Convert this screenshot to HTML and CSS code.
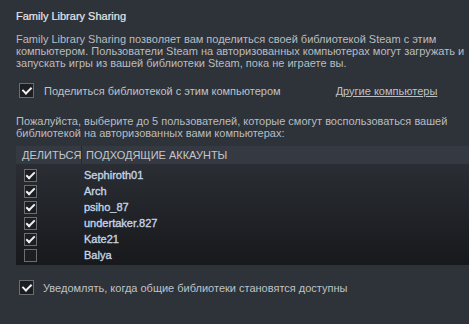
FILE: index.html
```html
<!DOCTYPE html>
<html lang="ru">
<head>
<meta charset="utf-8">
<link rel="stylesheet" href="styles.css">
</head>
<body>
<div class="page">
  <h1 class="title">Family Library Sharing</h1>
  <p class="intro">Family Library Sharing позволяет вам поделиться своей библиотекой Steam с этим компьютером. Пользователи Steam на авторизованных компьютерах могут загружать и запускать игры из вашей библиотеки Steam, пока не играете вы.</p>
  <div class="share-row">
    <label class="opt"><span class="cb big checked"></span><span>Поделиться библиотекой с этим компьютером</span></label>
    <a class="link" href="#">Другие компьютеры</a>
  </div>
  <p class="hint">Пожалуйста, выберите до 5 пользователей, которые смогут воспользоваться вашей библиотекой на авторизованных вами компьютерах:</p>
  <div class="table">
    <div class="thead">
      <div class="th c1">ДЕЛИТЬСЯ</div>
      <div class="th c2">ПОДХОДЯЩИЕ АККАУНТЫ</div>
    </div>
    <div class="tbody">
      <div class="tr"><div class="c1"><span class="cb checked"></span></div><div class="c2 name">Sephiroth01</div></div>
      <div class="tr"><div class="c1"><span class="cb checked"></span></div><div class="c2 name">Arch</div></div>
      <div class="tr"><div class="c1"><span class="cb checked"></span></div><div class="c2 name">psiho_87</div></div>
      <div class="tr"><div class="c1"><span class="cb checked"></span></div><div class="c2 name">undertaker.827</div></div>
      <div class="tr"><div class="c1"><span class="cb checked"></span></div><div class="c2 name">Kate21</div></div>
      <div class="tr"><div class="c1"><span class="cb"></span></div><div class="c2 name">Balya</div></div>
    </div>
  </div>
  <label class="opt notify"><span class="cb big checked"></span><span>Уведомлять, когда общие библиотеки становятся доступны</span></label>
</div>
</body>
</html>
```
FILE: styles.css
```css
html, body {
  margin: 0;
  padding: 0;
  background: #2e3239;
}
body {
  font-family: "Liberation Sans", Arial, sans-serif;
  color: #b3b8bd;
  font-size: 11px;
  width: 469px;
  height: 324px;
  overflow: hidden;
}
.page {
  padding: 8px 0 0 16px;
}
.title {
  margin: 0;
  font-size: 11px;
  font-weight: normal;
  color: #e4e7ea;
  line-height: 16px;
  -webkit-text-stroke: 0.2px #e4e7ea;
}
.intro {
  margin: 9px 0 0 0;
  line-height: 12px;
  width: 452px;
  color: #b9bdc1;
}
.share-row {
  display: flex;
  align-items: center;
  margin-top: 14px;
  height: 15px;
}
.opt {
  display: flex;
  align-items: center;
  gap: 10px;
  padding-left: 3px;
  color: #bfc3c7;
}
.link {
  margin-left: 55px;
  color: #bfc3c7;
  text-decoration: underline;
}
.cb {
  display: inline-block;
  box-sizing: border-box;
  width: 13px;
  height: 13px;
  border: 1px solid #6a6e73;
  background: #1c1e21;
  position: relative;
  flex: none;
}
.cb.big {
  width: 15px;
  height: 15px;
}
.cb.checked::after {
  content: "";
  position: absolute;
  left: 3px;
  top: 0px;
  width: 3px;
  height: 7px;
  border: solid #f2f2f2;
  border-width: 0 2px 2px 0;
  transform: rotate(45deg);
}
.cb.big.checked::after {
  left: 4px;
  top: 1px;
  width: 4px;
  height: 7px;
  border-width: 0 2.5px 2.5px 0;
}
.hint {
  margin: 17px 0 0 0;
  line-height: 12px;
  color: #b9bdc1;
}
.table {
  margin-top: 7px;
}
.thead {
  display: flex;
  height: 18px;
  align-items: center;
  background: #343942;
  color: #c3c7cb;
}
.th.c1 {
  width: 66px;
  padding-left: 6px;
  box-sizing: border-box;
  border-right: 1px solid #26292e;
  height: 18px;
  line-height: 18px;
}
.th.c2 {
  padding-left: 4px;
}
.tbody {
  background: linear-gradient(#2a2d33, #17191c);
  padding: 3px 0 2px;
}
.tr {
  display: flex;
  align-items: center;
  height: 16px;
}
.tr .c1 {
  width: 68px;
  padding-left: 8px;
  box-sizing: border-box;
  display: flex;
  align-items: center;
}
.name {
  color: #c3d4e6;
  font-size: 11px;
  -webkit-text-stroke: 0.35px #c3d4e6;
}
.notify {
  margin-top: 15px;
  gap: 9px;
}
```
